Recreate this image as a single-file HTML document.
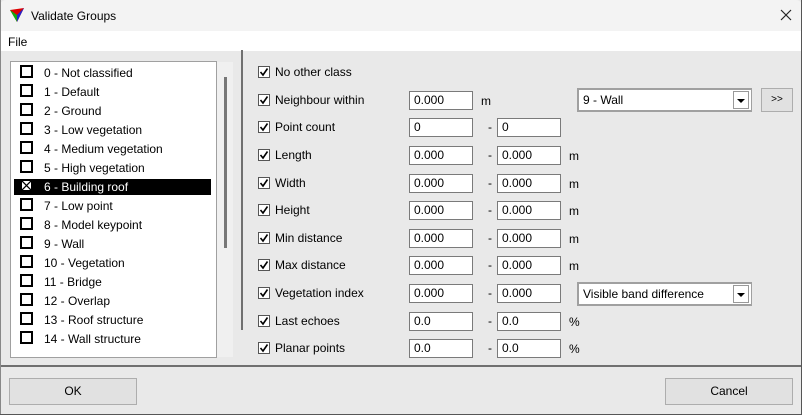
<!DOCTYPE html><html><head><style>
*{margin:0;padding:0;box-sizing:border-box}
body{width:802px;height:415px;overflow:hidden;font-family:"Liberation Sans",sans-serif;font-size:12px;color:#000;background:#e9e9e9;position:relative}
.a{position:absolute}
.cb{position:absolute;width:12px;height:12px;border:1px solid #555;background:#fff}
.lcb{position:absolute;width:13px;height:13px;border:2px solid #000;background:#fff}
.in{position:absolute;height:19px;background:#fff;border:1px solid #7a7a7a;padding:1px 4px;line-height:15px}
.t{position:absolute;white-space:nowrap;line-height:14px}
.btn{position:absolute;background:#e1e1e1;border:1px solid #adadad;text-align:center;line-height:25px}
</style></head><body>
<div class="a" style="left:0;top:0;width:802px;height:31px;background:#f3f3f3;border-radius:6px 6px 0 0"></div>
<svg class="a" style="left:9px;top:7px" width="16" height="16" viewBox="0 0 16 16"><polygon points="1,3 15,1 8,15" fill="#d00"/><polygon points="1,3 8,8 8,15" fill="#1a1"/><polygon points="15,1 8,8 8,15" fill="#22c"/></svg>
<div class="t" style="left:31px;top:9px">Validate Groups</div>
<svg class="a" style="left:780px;top:9px" width="12" height="12"><path d="M1 1L11 11M11 1L1 11" stroke="#222" stroke-width="1.2"/></svg>
<div class="a" style="left:0;top:31px;width:802px;height:20px;background:#fff"></div>
<div class="t" style="left:8px;top:35px">File</div>
<div class="a" style="left:10px;top:61px;width:207px;height:297px;background:#fff;border:1px solid #a0a0a0"></div>
<div class="a" style="left:217px;top:62px;width:16px;height:295px;background:#f0f0f0"></div>
<div class="a" style="left:224px;top:77px;width:3px;height:171px;background:#777"></div>
<div class="a" style="left:241px;top:50px;width:2px;height:280px;background:#707070"></div>
<div class="a" style="left:0;top:365px;width:802px;height:2px;background:#707070"></div>
<div class="a" style="left:14px;top:179px;width:197px;height:16px;background:#000"></div>
<div id="list"></div>
<div id="right"></div>
<div class="in" style="left:577px;top:88px;width:175px;height:24px;line-height:18px;border:2px solid #a0a0a0;border-right-width:1px">9 - Wall</div>
<div class="a" style="left:733px;top:91px;width:16px;height:18px;background:#fff;border:1px solid #999"></div>
<div class="a" style="left:737px;top:99px;width:0;height:0;border-left:4px solid transparent;border-right:4px solid transparent;border-top:4px solid #000"></div>
<div class="btn" style="left:761px;top:88px;width:32px;height:24px;line-height:22px;font-size:10px">&gt;&gt;</div>
<div class="in" style="left:577px;top:282px;width:175px;height:24px;line-height:18px;border:2px solid #a0a0a0;border-right-width:1px">Visible band difference</div>
<div class="a" style="left:733px;top:285px;width:16px;height:18px;background:#fff;border:1px solid #999"></div>
<div class="a" style="left:737px;top:293px;width:0;height:0;border-left:4px solid transparent;border-right:4px solid transparent;border-top:4px solid #000"></div>
<div class="btn" style="left:9px;top:378px;width:128px;height:27px">OK</div>
<div class="btn" style="left:665px;top:378px;width:128px;height:27px">Cancel</div>
<div class="a" style="right:0;top:0;width:1px;height:415px;background:#555"></div>
<div class="a" style="left:0;top:0;width:1px;height:415px;background:#888"></div>
<div class="a" style="left:0;bottom:0;width:802px;height:1px;background:#555"></div>
<script>
var L=["0 - Not classified","1 - Default","2 - Ground","3 - Low vegetation","4 - Medium vegetation","5 - High vegetation","6 - Building roof","7 - Low point","8 - Model keypoint","9 - Wall","10 - Vegetation","11 - Bridge","12 - Overlap","13 - Roof structure","14 - Wall structure"];
var h="";L.forEach(function(s,i){var y=72+i*19;var sel=i==6;
h+='<div class="lcb" style="left:20px;top:'+(y-7)+'px">'+(sel?'<svg width="9" height="9" style="display:block"><path d="M0 0L9 9M9 0L0 9" stroke="#000" stroke-width="1.3"/></svg>':'')+'</div>';
h+='<div class="t" style="left:44px;top:'+(y-6)+'px;color:'+(sel?'#fff':'#000')+'">'+s+'</div>';});
document.getElementById("list").innerHTML=h;
var R=[["No other class"],["Neighbour within","0.000",null,"m"],["Point count","0","0",""],["Length","0.000","0.000","m"],["Width","0.000","0.000","m"],["Height","0.000","0.000","m"],["Min distance","0.000","0.000","m"],["Max distance","0.000","0.000","m"],["Vegetation index","0.000","0.000",""],["Last echoes","0.0","0.0","%"],["Planar points","0.0","0.0","%"]];
var Y=[72,100,127,155,183,210,238,265,293,321,348];h="";
R.forEach(function(r,i){var y=Y[i];
h+='<div class="cb" style="left:258px;top:'+(y-6)+'px"><svg width="10" height="10" style="display:block"><path d="M1.5 5L4 8L8.5 1.5" stroke="#000" stroke-width="1.6" fill="none"/></svg></div>';
h+='<div class="t" style="left:275px;top:'+(y-7)+'px">'+r[0]+'</div>';
if(r[1]!=null)h+='<div class="in" style="left:409px;top:'+(y-9)+'px;width:64px">'+r[1]+'</div>';
if(r[2]!=null){h+='<div class="t" style="left:488px;top:'+(y-7)+'px">-</div><div class="in" style="left:497px;top:'+(y-9)+'px;width:64px">'+r[2]+'</div>';
if(r[3])h+='<div class="t" style="left:569px;top:'+(y-6)+'px">'+r[3]+'</div>';}
else if(r[3])h+='<div class="t" style="left:481px;top:'+(y-6)+'px">'+r[3]+'</div>';});
document.getElementById("right").innerHTML=h;
</script>
</body></html>
